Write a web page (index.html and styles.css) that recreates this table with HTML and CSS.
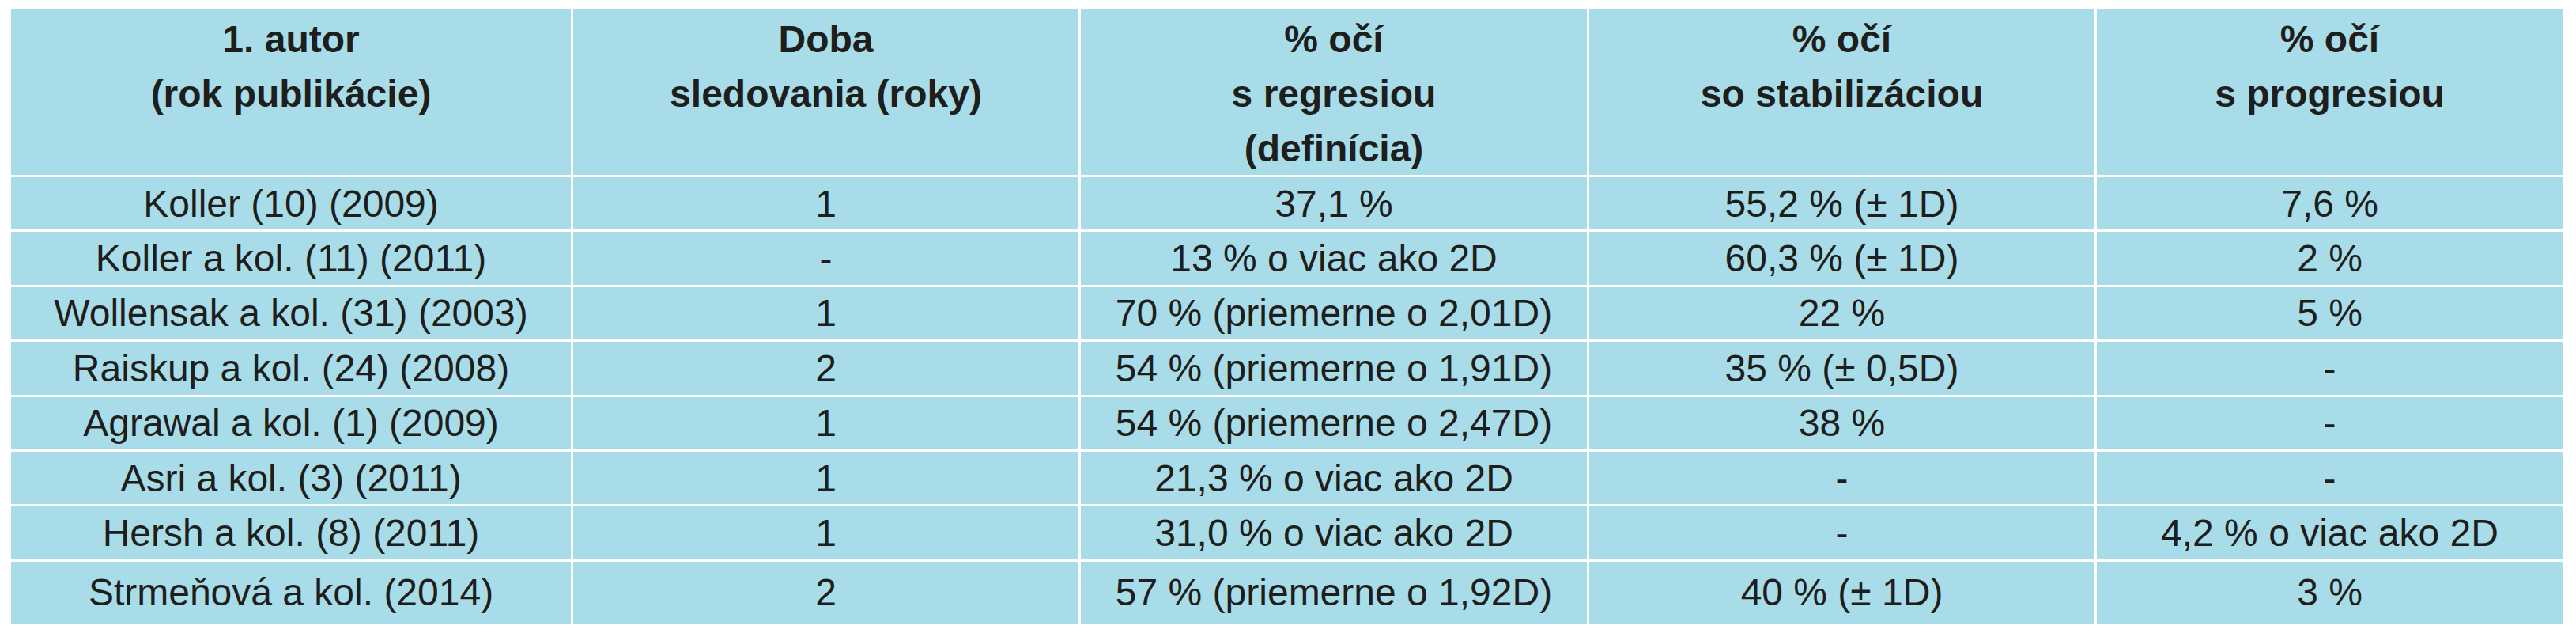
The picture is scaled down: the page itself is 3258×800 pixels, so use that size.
FILE: index.html
```html
<!DOCTYPE html>
<html lang="sk">
<head>
<meta charset="utf-8">
<title>Tabuľka</title>
<link rel="stylesheet" href="styles.css">
</head>
<body>
<div class="grid">
  <div class="cell head">1. autor<br>(rok publikácie)</div>
  <div class="cell head">Doba<br>sledovania (roky)</div>
  <div class="cell head">% očí<br>s regresiou<br>(definícia)</div>
  <div class="cell head">% očí<br>so stabilizáciou</div>
  <div class="cell head">% očí<br>s progresiou</div>

  <div class="cell">Koller (10) (2009)</div>
  <div class="cell">1</div>
  <div class="cell">37,1 %</div>
  <div class="cell">55,2 % (± 1D)</div>
  <div class="cell">7,6 %</div>

  <div class="cell">Koller a kol. (11) (2011)</div>
  <div class="cell">-</div>
  <div class="cell">13 % o viac ako 2D</div>
  <div class="cell">60,3 % (± 1D)</div>
  <div class="cell">2 %</div>

  <div class="cell">Wollensak a kol. (31) (2003)</div>
  <div class="cell">1</div>
  <div class="cell">70 % (priemerne o 2,01D)</div>
  <div class="cell">22 %</div>
  <div class="cell">5 %</div>

  <div class="cell">Raiskup a kol. (24) (2008)</div>
  <div class="cell">2</div>
  <div class="cell">54 % (priemerne o 1,91D)</div>
  <div class="cell">35 % (± 0,5D)</div>
  <div class="cell">-</div>

  <div class="cell">Agrawal a kol. (1) (2009)</div>
  <div class="cell">1</div>
  <div class="cell">54 % (priemerne o 2,47D)</div>
  <div class="cell">38 %</div>
  <div class="cell">-</div>

  <div class="cell">Asri a kol. (3) (2011)</div>
  <div class="cell">1</div>
  <div class="cell">21,3 % o viac ako 2D</div>
  <div class="cell">-</div>
  <div class="cell">-</div>

  <div class="cell">Hersh a kol. (8) (2011)</div>
  <div class="cell">1</div>
  <div class="cell">31,0 % o viac ako 2D</div>
  <div class="cell">-</div>
  <div class="cell">4,2 % o viac ako 2D</div>

  <div class="cell">Strmeňová a kol. (2014)</div>
  <div class="cell">2</div>
  <div class="cell">57 % (priemerne o 1,92D)</div>
  <div class="cell">40 % (± 1D)</div>
  <div class="cell">3 %</div>
</div>
</body>
</html>
```
FILE: styles.css
```css
html, body {
  margin: 0;
  padding: 0;
  background: #ffffff;
}

body {
  font-family: "Liberation Sans", Arial, sans-serif;
  color: #1e1e1c;
}

.grid {
  display: grid;
  grid-template-columns: 708px 639px 640px 639px 589px;
  grid-template-rows: 209px repeat(7, 66.4px) 78px;
  gap: 3px;
  width: max-content;
  margin: 12px 0 0 14px;
}

.cell {
  background: #a8dce8;
  display: flex;
  align-items: center;
  justify-content: center;
  text-align: center;
  font-size: 48px;
  line-height: 69px;
  white-space: nowrap;
}

.cell.head {
  align-items: flex-start;
  font-weight: bold;
  padding-top: 3px;
}
```
